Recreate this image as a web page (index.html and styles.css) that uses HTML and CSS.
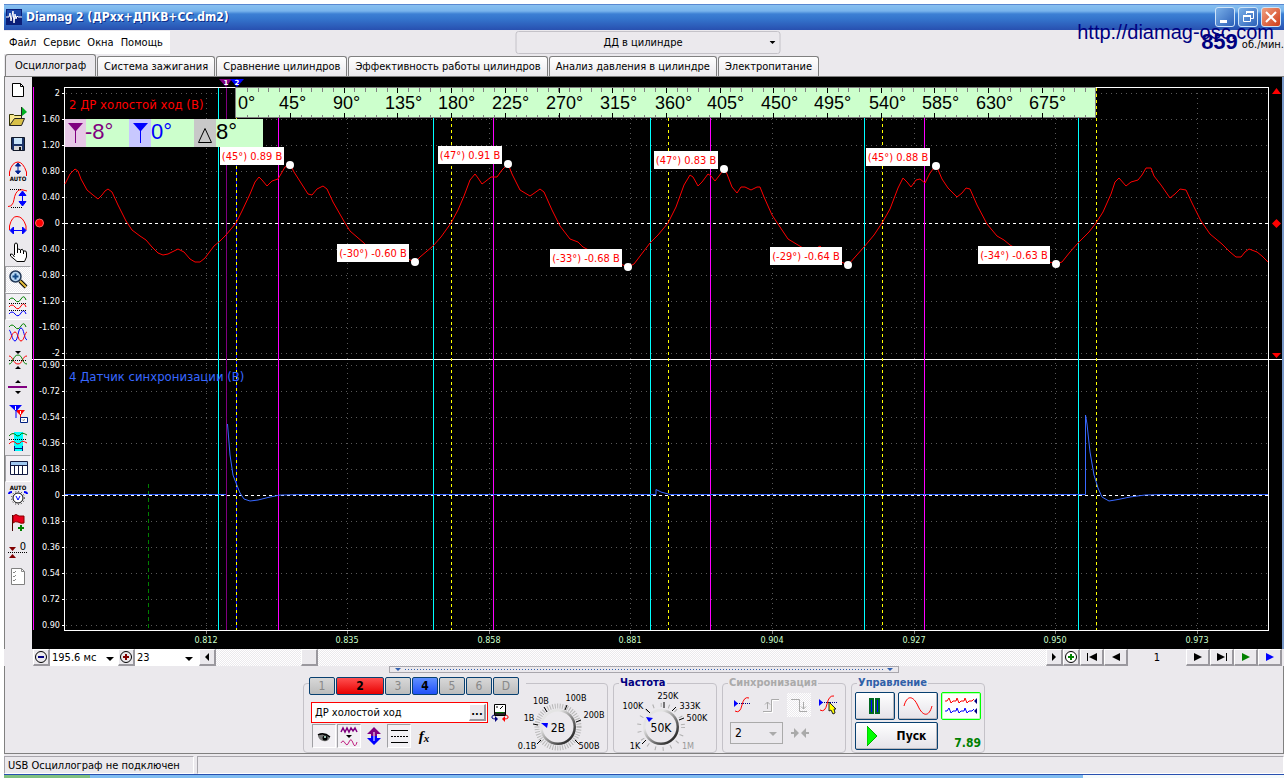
FILE: index.html
```html
<!DOCTYPE html>
<html lang="ru">
<head>
<meta charset="utf-8">
<title>Diamag 2</title>
<link rel="stylesheet" href="styles.css">
</head>
<body>
<div class="app">
  <header class="titlebar">
    <svg class="logo" width="16" height="16" viewBox="0 0 16 16"><rect width="16" height="16" fill="#0a1e78"/><rect x="1" y="1" width="14" height="7" fill="#1c46a8"/><path d="M0 8h3l1-4 1 8 2-10 1 12 1-9 1 5 1-3 1 1h4" fill="none" stroke="#fff"/></svg>
    <h1 class="title">Diamag 2 (ДРхх+ДПКВ+СС.dm2)</h1>
    <div class="winbtns">
      <button class="wbtn" aria-label="Свернуть"><svg width="18" height="18"><path d="M4 12h7v3H4z" fill="#fff"/></svg></button>
      <button class="wbtn" aria-label="Развернуть"><svg width="18" height="18" fill="none" stroke="#fff"><path d="M7.500 6V4.500h7v6H12"/><path d="M7 4h8" stroke-width="2"/><path d="M4.500 7.500h7v6h-7z"/><path d="M4 8h8" stroke-width="2"/></svg></button>
      <button class="wbtn close" aria-label="Закрыть"><svg width="18" height="18"><path d="M4 4l10 10M14 4L4 14" stroke="#fff" stroke-width="2"/></svg></button>
    </div>
  </header>
  <div class="menurow">
    <nav class="menu"><button>Файл</button><button>Сервис</button><button>Окна</button><button>Помощь</button></nav>
    <div class="preset"><select aria-label="Настройка"><option>ДД в цилиндре</option></select><svg class="arrow" width="6" height="3"><path d="M0 0h6l-3 3z"/></svg></div>
    <div class="rpm"><b>859</b><span>об./мин.</span></div>
    <a class="site" href="#">http://diamag-osc.com</a>
  </div>
  <div class="tabs" role="tablist">
    <button class="tab active" role="tab" aria-selected="true">Осциллограф</button><button class="tab" role="tab">Система зажигания</button><button class="tab" role="tab">Сравнение цилиндров</button><button class="tab" role="tab">Эффективность работы цилиндров</button><button class="tab" role="tab">Анализ давления в цилиндре</button><button class="tab" role="tab">Электропитание</button>
  </div>
  <main class="work">
    <aside class="tools">
      <button aria-label="Новый"><svg viewBox="0 0 20 20"><path d="M4.500 3.500h8l3 3v10h-11z" fill="#fff" stroke="#000"/><path d="M12.500 3.500v3h3" fill="none" stroke="#000"/></svg></button>
      <button aria-label="Открыть"><svg viewBox="0 0 20 20"><path d="M1.500 18.500v-11h4l1 1h7v3" fill="#f8e890" stroke="#333300"/><path d="M1.500 18.500l5-7h10l-3 7z" fill="#d8c048" stroke="#222"/><path d="M13.500 0v11" stroke="#222"/><path d="M14 0l5 5-5 4z" fill="#00b020"/></svg></button>
      <button aria-label="Сохранить"><svg viewBox="0 0 20 20"><path d="M3.500 3.500h13v13H5l-1.500-1.500z" fill="#1c3468" stroke="#101828"/><path d="M6 4h8v6H6z" fill="#c8e4f8"/><path d="M6 12h8v4H6z" fill="#d8d8d8"/><path d="M11 13h2v3h-2z" fill="#111"/></svg></button>
      <button aria-label="Автоусиление"><svg viewBox="0 0 20 20"><path d="M1.500 15v-4Q4 1 10 1q5 0 8.500 10v4" fill="none" stroke="red"/><path d="M10 3v9M7.500 5L10 2l2.500 3zM7.500 10L10 13l2.500-3z" fill="#002090" stroke="#002090"/><text x="10" y="20" class="tiny">AUTO</text></svg></button>
      <button aria-label="Амплитуда"><svg viewBox="0 0 20 20"><path d="M0 18.500q5 0 6-7T11 2q2-1 8 1" fill="none" stroke="red"/><path d="M2 1.500h12M3 19.500h12" stroke="#000" stroke-dasharray="1 1"/><path d="M14.500 5v10M11 7.500L14.500 3 18 7.500zM11 13.500L14.500 18l3.500-4.500z" fill="#00f" stroke="#00f"/></svg></button>
      <button aria-label="Длительность"><svg viewBox="0 0 20 20"><path d="M1.500 15v-4Q4 1 9 1.500q6 0 9 9.500v4" fill="none" stroke="red"/><path d="M4 15.500h12M5.500 12L2 15.500 5.500 19zM14.500 12l3.500 3.500-3.500 3.500z" fill="#00f" stroke="#00f"/></svg></button>
      <button aria-label="Рука"><svg viewBox="0 0 20 20"><path d="M6.500 13V3q0-2 1.500-2t1.500 2v5q1-2 3 0 2-2 3 1 3-1 3 2v4l-2 4.500H9L2.500 14v-2q2-1 4 3" fill="#fff" stroke="#000"/><path d="M9.500 8v3M12.500 8v3M15.500 9v3" stroke="#000"/></svg></button>
      <button class="on hatch" aria-label="Масштаб"><svg viewBox="0 0 20 20"><path d="M12 12l6 6" stroke="#000" stroke-width="4"/><path d="M12 12l6 6" stroke="#e8c040" stroke-width="2"/><circle cx="7.500" cy="7.500" r="5.500" fill="#b8d8f4" stroke="#223858" stroke-width="1.500"/><path d="M7.500 4.500v6M4.500 7.500h6" stroke="#104888" stroke-width="2"/></svg></button>
      <button class="on" aria-label="Раздельно"><svg viewBox="0 0 20 20" fill="none"><path d="M1 4q3-4 6 0t6-1 5 1" stroke="#008000"/><path d="M1 11q3-4 6 0t6-1 5 1" stroke="red"/><path d="M1 18q3-4 6 0t6-1 5 1" stroke="#00f"/><path d="M1 7.500h18M1 14.500h18" stroke="#000" stroke-dasharray="1 1"/></svg></button>
      <button aria-label="Вместе"><svg viewBox="0 0 20 20" fill="none"><path d="M1 4q3-4 6 0t6-1 5 1" stroke="#008000"/><path d="M1 7c2 0 3 11 6 11S10 5 13 5s3 11 6 12" stroke="#00f"/><path d="M1 17C3 17 4 9 7 9s3 9 6 9 4-9 6-9" stroke="red"/></svg></button>
      <button aria-label="Центр"><svg viewBox="0 0 20 20" fill="none"><path d="M1 6c4 0 4 8 9 8s4-8 9-8" stroke="red"/><path d="M1 14c4 0 4-9 9-9s4 9 9 9" stroke="#008000"/><path d="M1 10.500h18" stroke="#000" stroke-dasharray="1 1"/><path d="M7 1h6l-3 3zM7 19h6l-3-3z" fill="#000"/></svg></button>
      <button aria-label="Делитель"><svg viewBox="0 0 20 20"><path d="M0 10h19" stroke="#800080" stroke-width="2"/><path d="M7 6h6l-3-3zM7 14h6l-3 3z"/></svg></button>
      <button aria-label="Маркеры"><svg viewBox="0 0 20 20"><path d="M7 6h10l-4 5v7h-1v-7z" fill="red"/><path d="M1 1h13L8.500 7v7h-1V7z" fill="#00f"/><path d="M7.500 2v4M12.500 7v3" stroke="#fff"/><path d="M12.500 13.500h7v5h-7z" fill="#fff" stroke="#002080"/><path d="M14 15.500l1 1 2-1" fill="none" stroke="#888"/></svg></button>
      <button aria-label="Измерение"><svg viewBox="0 0 20 20" fill="none"><path d="M6 1h9v19H6z" fill="#0ff"/><path d="M1 5q4-5 8 0 3 0 4-2t6 1" stroke="#008000"/><path d="M1 13q4-5 8 0 3 0 4-2t6 1" stroke="red"/><path d="M1 8.500h18" stroke="#000" stroke-dasharray="1 1"/><path d="M6.500 15v5M14.500 15v5M7 17.500h7" stroke="#002080"/></svg></button>
      <button class="on" aria-label="Таблица"><svg viewBox="0 0 20 20"><path d="M2.500 3.500h17v13h-17z" fill="#fff" stroke="#101840"/><path d="M3 4h16v3H3z" fill="#a0c8f0"/><path d="M3 7.500h16M6.500 7v9M10.500 7v9M14.500 7v9" stroke="#101840"/></svg></button>
      <button aria-label="Авто вольты"><svg viewBox="0 0 20 20"><text x="10" y="5" class="tiny">AUTO</text><path d="M1 9q0-2 3-2M19 9q0-2-3-2" fill="none" stroke="#00f" stroke-width="2"/><circle cx="10" cy="13" r="6.500" fill="none" stroke="#333" stroke-dasharray="1 2"/><circle cx="10" cy="13" r="5" fill="#fff" stroke="#000"/><path d="M8 11l2 4 2-4" fill="none" stroke="#00f"/></svg></button>
      <button aria-label="Флаг"><svg viewBox="0 0 20 20"><path d="M4.500 3v16" stroke="#400"/><path d="M5 4q3-3 6 0h5v7q-3 1-6-1-3-1-5 1z" fill="#e8001c" stroke="#800"/><path d="M13 13v6M10 16h6" stroke="#008000" stroke-width="2"/></svg></button>
      <button aria-label="Ноль"><svg viewBox="0 0 20 20"><path d="M1 8h7l-3.500 4zM1 19h7l-3.500-4z" fill="#800000"/><path d="M0 13.500h19" stroke="#000" stroke-dasharray="1 1"/><text x="15" y="11" class="zero">0</text></svg></button>
      <button aria-label="Список"><svg viewBox="0 0 20 20" fill="none"><path d="M3.500 2.500h10l3 3v13h-13z" fill="#fff" stroke="#808080"/><path d="M13.500 2.500v3h3M5 6l1 1 2-2M5 10l1 1 2-2M5 14l1 1 2-2" stroke="#888"/></svg></button>
    </aside>
    <svg class="scope" viewBox="32 77 1250 572" role="img" aria-label="Осциллограмма">
      <rect x="32" y="77" width="1250" height="572" fill="#000"/>
      <g fill="none" shape-rendering="crispEdges">
        <path stroke="#585858" stroke-dasharray="1 4" d="M66 93.500H1268M66 119.500H1268M66 145.500H1268M66 171.500H1268M66 197.500H1268M66 249.500H1268M66 275.500H1268M66 301.500H1268M66 327.500H1268M66 353.500H1268M66 365.500H1268M66 391.500H1268M66 417.500H1268M66 443.500H1268M66 469.500H1268M66 521.500H1268M66 547.500H1268M66 573.500H1268M66 599.500H1268M66 625.500H1268M206.500 93V630M347.500 93V630M489.500 93V630M630.500 93V630M772.500 93V630M914.500 93V630M1055.500 93V630M1197.500 93V630"/>
        <path stroke="#fff" stroke-dasharray="3 3" d="M65 223.500H1268M65 495.500H1268"/>
        <path stroke="#fff" d="M64 87.500H1268.500V630.500H64.500V87M32 359.500H1282M62 93.500h2M62 119.500h2M62 145.500h2M62 171.500h2M62 197.500h2M62 223.500h2M62 249.500h2M62 275.500h2M62 301.500h2M62 327.500h2M62 353.500h2M62 365.500h2M62 391.500h2M62 417.500h2M62 443.500h2M62 469.500h2M62 495.500h2M62 521.500h2M62 547.500h2M62 573.500h2M62 599.500h2M62 625.500h2"/>
        <path stroke="#808080" d="M206.500 631v3M347.500 631v3M489.500 631v3M630.500 631v3M772.500 631v3M914.500 631v3M1055.500 631v3M1197.500 631v3"/>
        <path stroke="#0ff" d="M218.500 88V630M433.500 88V630M650.500 88V630M864.500 88V630M1078.500 88V630"/>
        <path stroke="#f0f" d="M33.500 87V630M278.500 88V630M493.500 88V630M710.500 88V630M924.500 88V630"/>
        <path stroke="#800080" d="M226.500 88V630"/>
        <path stroke="#00f" d="M236.500 88V630"/>
        <path stroke="#ff0" stroke-dasharray="3 3" d="M236.500 88V630M451.500 88V630M668.500 88V630M882.500 88V630M1096.500 88V630"/>
        <path stroke="#008000" stroke-dasharray="4 3" d="M148.500 484V630"/>
      </g>
      <path fill="none" stroke="#f00" stroke-linejoin="round" d="M65 184L70 174 75 169 78 171 81 179 87 190 93 195 98 199 102 195 105 191 108 189 112 192 118 205 126 221 132 230 140 236 146 240 152 247 158 253 163 255 168 254 178 249 184 252 190 259 195 262 200 262 205 258 214 246 220 241 226 235 236 223 242 211 250 194 255 182 259 177 262 180 267 186 272 181 278 179 281 174 285 167 290 164 294 172 301 183 308 194 312 195 317 189 323 186 327 189 333 202 345 223 350 231 357 237 364 243 370 250 400 255 408 259 415 262 420 257 433 246 441 237 451 223 458 210 464 196 470 180 475 174 478 178 482 184 486 181 491 177 497 177 502 170 508 164 512 174 520 190 530 196 533 194 540 189 544 192 552 210 560 226 570 239 578 242 583 247 600 256 628 267 634 264 650 243 658 235 668 223 676 207 684 185 690 175 693 177 698 186 702 182 708 174 711 176 715 181 719 176 724 169 727 174 732 187 737 193 741 187 745 187 751 190 757 187 760 187 764 197 772 215 780 227 788 239 798 245 810 252 820 246 830 257 848 265 856 256 864 247 874 235 882 223 890 209 898 188 903 178 907 182 911 187 916 180 920 179 925 183 930 173 936 165 942 179 948 188 957 197 962 193 966 188 970 189 977 205 987 224 997 236 1004 240 1010 245 1030 256 1056 264 1062 262 1070 252 1078 243 1089 232 1096 223 1103 212 1111 194 1115 182 1119 178 1126 186 1131 182 1138 180 1142 175 1146 168 1151 168 1154 176 1161 185 1170 198 1175 194 1180 189 1186 190 1192 203 1201 221 1210 234 1222 244 1230 252 1236 257 1241 257 1245 252 1249 249 1257 252 1262 256 1268 262"/>
      <path fill="none" stroke="#3868ff" d="M65 494.500H226M227.500 424L230 455 233 475 236 483 240 493 244 499 250 501 258 500 268 497.500 280 495 300 494.500H656V489.500L661 492 670 494.500H1085.500V415L1087 424 1090 452 1094 475 1098 488 1102 497 1109 501 1118 499.500 1130 497 1145 495 1160 494.500H1268"/>
      <g class="name"><text x="69" y="109" fill="#f00">2 ДР холостой ход (В)</text><text x="69" y="381" fill="#3868ff">4 Датчик синхронизации (В)</text></g>
      <g class="scale"><text x="60" y="96">2</text><text x="60" y="122">1.60</text><text x="60" y="148">1.20</text><text x="60" y="174">0.80</text><text x="60" y="200">0.40</text><text x="60" y="226">0</text><text x="60" y="252">-0.40</text><text x="60" y="278">-0.80</text><text x="60" y="304">-1.20</text><text x="60" y="330">-1.60</text><text x="60" y="356">-2</text><text x="60" y="368">-0.90</text><text x="60" y="394">-0.72</text><text x="60" y="420">-0.54</text><text x="60" y="446">-0.36</text><text x="60" y="472">-0.18</text><text x="60" y="498">0</text><text x="60" y="524">0.18</text><text x="60" y="550">0.36</text><text x="60" y="576">0.54</text><text x="60" y="602">0.72</text><text x="60" y="628">0.90</text></g>
      <g class="time"><text x="206" y="643">0.812</text><text x="347" y="643">0.835</text><text x="489" y="643">0.858</text><text x="630" y="643">0.881</text><text x="772" y="643">0.904</text><text x="914" y="643">0.927</text><text x="1055" y="643">0.950</text><text x="1197" y="643">0.973</text></g>
      <path d="M235.500 87.500H1095.500V117.500H235.500z" fill="#cfc" stroke="#808080"/>
      <g fill="none" shape-rendering="crispEdges"><path stroke="#808080" stroke-width="4" stroke-dasharray="1 9.740" d="M247 90H1095"/><path stroke="#808080" stroke-width="2" stroke-dasharray="1 9.740" d="M247 116H1095"/><path stroke="#000" stroke-width="5" stroke-dasharray="1 52.700" d="M290 90H1080M290 115H1080"/></g>
      <g class="deg"><text x="238" y="109">0°</text><text x="279" y="109">45°</text><text x="333" y="109">90°</text><text x="385" y="109">135°</text><text x="438" y="109">180°</text><text x="492" y="109">225°</text><text x="546" y="109">270°</text><text x="600" y="109">315°</text><text x="655" y="109">360°</text><text x="707" y="109">405°</text><text x="761" y="109">450°</text><text x="814" y="109">495°</text><text x="869" y="109">540°</text><text x="922" y="109">585°</text><text x="976" y="109">630°</text><text x="1029" y="109">675°</text></g>
      <path d="M219 79h13l-6 8z" fill="#800080"/><path d="M230 79h14l-7 8z" fill="#00f"/>
      <g class="mark"><text x="226" y="85">1</text><text x="237" y="85">2</text></g>
      <path d="M65 119H263V147H65z" fill="#cfc"/><path d="M65 119h21v28H65z" fill="#e6c8e6"/><path d="M129 119h22v28h-22z" fill="#c8c8ff"/><path d="M194 119h22v28h-22z" fill="#c8c8c8"/>
      <path d="M68 123h15l-7 8v12h-1v-12z" fill="#800080"/><path d="M133 123h15l-7 8v12h-1v-12z" fill="#00f"/><path d="M198.500 142.500h13l-6.500-14z" fill="none" stroke="#000"/>
      <g class="delta"><text x="85" y="139" fill="#800080">-8°</text><text x="151" y="139" fill="#00f">0°</text><text x="216" y="139" fill="#000">8°</text></g>
      <path fill="#fff" d="M220 147h64v18h-64zM438 146h64v18h-64zM654 151h64v18h-64zM866 148h64v18h-64zM337 244h72v18h-72zM550 249h72v18h-72zM770 247h72v18h-72zM978 246h72v18h-72z"/>
      <g class="call"><text x="252" y="160">(45°) 0.89 В</text><text x="470" y="159">(47°) 0.91 В</text><text x="686" y="164">(47°) 0.83 В</text><text x="898" y="161">(45°) 0.88 В</text><text x="373" y="257">(-30°) -0.60 В</text><text x="586" y="262">(-33°) -0.68 В</text><text x="806" y="260">(-29°) -0.64 В</text><text x="1014" y="259">(-34°) -0.63 В</text></g>
      <g fill="#fff"><circle cx="290" cy="165" r="4"/><circle cx="508" cy="164" r="4"/><circle cx="724" cy="169" r="4"/><circle cx="936" cy="166" r="4"/><circle cx="415" cy="262" r="4"/><circle cx="628" cy="267" r="4"/><circle cx="848" cy="265" r="4"/><circle cx="1056" cy="264" r="4"/></g>
      <circle cx="39.500" cy="223" r="4" fill="#f00" stroke="#f66"/>
      <path fill="#f00" d="M1272 94h9l-4.500-6zM1276.500 219l4.500 4.500-4.500 4.500-4.500-4.500zM1272 353h9l-4.500 5z"/>
    </svg>
  </main>
  <div class="navrow">
    <button class="nb" aria-label="Уменьшить"><svg width="14" height="14"><circle cx="7" cy="7" r="5.500" fill="none" stroke="#000"/><path d="M4 7h6" stroke="#000080" stroke-width="2"/></svg></button>
    <div class="pick span"><select aria-label="Развёртка"><option>195.6 мс</option></select><svg class="arrow" width="8" height="4"><path d="M0 0h8l-4 4z"/></svg></div>
    <button class="nb" aria-label="Увеличить"><svg width="14" height="14"><circle cx="7" cy="7" r="5.500" fill="none" stroke="#000"/><path d="M4 7h6M7 4v6" stroke="#800000" stroke-width="2"/></svg></button>
    <div class="pick pages"><select aria-label="Масштаб"><option>23</option></select><svg class="arrow" width="8" height="4"><path d="M0 0h8l-4 4z"/></svg></div>
    <button class="nb" aria-label="Влево"><svg width="6" height="8"><path d="M5 0v8L1 4z"/></svg></button>
    <input class="scroll" type="range" min="0" max="1000" value="104" aria-label="Прокрутка">
    <button class="nb" aria-label="Вправо"><svg width="6" height="8"><path d="M1 0v8l4-4z"/></svg></button>
    <button class="nb" aria-label="Добавить"><svg width="14" height="14"><circle cx="7" cy="7" r="5.500" fill="#fff" stroke="#000"/><path d="M4 7h6M7 4v6" stroke="#008000" stroke-width="2"/></svg></button>
    <button class="nb wide" aria-label="Первая"><svg width="12" height="8"><path d="M1 0h1v8H1zM11 0v8L3 4z"/></svg></button>
    <button class="nb wide" aria-label="Назад"><svg width="8" height="8"><path d="M8 0v8L0 4z"/></svg></button>
    <output class="page">1</output>
    <button class="nb wide" aria-label="Вперёд"><svg width="8" height="8"><path d="M0 0v8l8-4z"/></svg></button>
    <button class="nb wide" aria-label="Последняя"><svg width="12" height="8"><path d="M10 0h1v8h-1zM1 0v8l8-4z"/></svg></button>
    <button class="nb wide" aria-label="Воспроизвести"><svg width="8" height="8"><path d="M0 0v8l8-4z" fill="#008000"/></svg></button>
    <button class="nb wide" aria-label="Далее"><svg width="8" height="8"><path d="M0 0v8l8-4z" fill="#00f"/></svg></button>
  </div>
  <section class="bottom">
    <div class="splitter"><svg width="6" height="3"><path d="M0 0h6l-3 3z"/></svg><i></i><svg width="6" height="3"><path d="M0 0h6l-3 3z"/></svg></div>
    <div class="groups">
      <fieldset class="group chan">
        <legend><button class="ch">1</button><button class="ch red">2</button><button class="ch">3</button><button class="ch blue">4</button><button class="ch">5</button><button class="ch">6</button><button class="ch">D</button></legend>
        <div class="chbody">
          <div class="chleft">
            <div class="row"><div class="field"><input type="text" value="ДР холостой ход" aria-label="Имя канала"><button class="dots" aria-label="Выбрать">...</button></div>
              <button class="flat small" aria-label="Заменить"><svg width="18" height="19" viewBox="0 0 18 19"><path d="M3.500 1.500h11v11h-11z" fill="#fff" stroke="#000"/><path d="M4 9h10v3H4z" fill="#222"/><path d="M5 9.500h8" stroke="#060"/><path d="M9 6l3-3M5 4h2" stroke="#000"/><path d="M3 12q-3 1-2 3 1 1 4 1" fill="none" stroke="#000080"/><path d="M4 13v6l3-3z" fill="#000080"/><path d="M15 12q3 1 2 3-1 1-4 1" fill="none" stroke="red"/><path d="M14 13v6l-3-3z" fill="red"/></svg></button></div>
            <div class="row icons">
              <button class="flat on" aria-label="Видимость"><svg width="22" height="20" viewBox="0 0 22 20"><path d="M5 10q6-3 12 1-1 5-7 4-4-1-5-5z" fill="#777"/><path d="M5 9q6-3 12 2" fill="none" stroke="#000" stroke-width="1.500"/><circle cx="12" cy="12" r="2.500"/><circle cx="12" cy="11" r="1" fill="#cfe"/></svg></button>
              <button class="flat on" aria-label="Фильтр"><svg width="20" height="20" viewBox="0 0 20 20" fill="none"><path d="M2 6l2-4 2 4 2-4 2 4 2-4 2 3 2-3 2 4" stroke="#800080" stroke-width="1.500"/><path d="M7 9h6l-3 3z" fill="#000"/><path d="M2 17q2-4 4 0t4-1 4 1 4-1" stroke="#c02080"/></svg></button>
              <button class="flat" aria-label="Инвертировать"><svg width="20" height="20" viewBox="0 0 20 20"><path d="M10 1l7 7h-4v3H7V8H3z" fill="#800080"/><path d="M10 19l7-7h-4v-2H7v2H3z" fill="#00f"/><path d="M10 6v9" stroke="#fff"/></svg></button>
              <button class="flat on" aria-label="Линии"><svg width="20" height="20"><path d="M2 4.500h17M2 16.500h17" stroke="#000"/><path d="M2 10.500h17" stroke="#000" stroke-dasharray="2 1"/></svg></button>
              <button class="flat fx">f<small>x</small></button>
            </div>
          </div>
          <svg class="knob" width="94" height="62" viewBox="512 688 94 62"><circle cx="557" cy="726" r="21" fill="none" stroke="#b8b8b8" stroke-width="5" stroke-dasharray="1 1.500"/><use href="#dial" x="557" y="726"/><path d="M532 723l5 1M543 706l3 5M566 704l-2 5M580 719l-5 2M578 743l-4-4M536 743l4-4" stroke="#000"/><path d="M540 722l7 0-1 5z" fill="#00f"/><g class="klabel"><text x="540" y="703">10В</text><text x="575" y="700">100В</text><text x="528" y="720">1В</text><text x="593" y="717">200В</text><text x="526" y="748">0.1В</text><text x="588" y="748">500В</text></g><text class="kval" x="557" y="731">2В</text></svg>
        </div>
      </fieldset>
      <fieldset class="group freq">
        <legend>Частота</legend>
        <svg class="knob" width="94" height="62" viewBox="618 688 94 62"><defs><linearGradient id="dialShade" x2="1" y2="1"><stop offset=".3" stop-color="#e4e4e4"/><stop offset=".7" stop-color="#555"/><stop offset="1" stop-color="#000"/></linearGradient><g id="dial"><circle r="18" fill="url(#dialShade)"/><circle r="15.500" fill="#ebe9ed"/></g></defs><circle cx="661" cy="726" r="22" fill="none" stroke="#b0b0b0" stroke-width="4" stroke-dasharray="1 6.900"/><use href="#dial" x="661" y="726"/><path d="M646 708l4 4M664 701v6M672 710l4-4M679 719l5-2M642 743l4-4" stroke="#000"/><path d="M646 716l7 1-4 4z" fill="#00f"/><g class="klabel"><text x="668" y="698">250K</text><text x="633" y="708">100K</text><text x="690" y="708">333K</text><text x="697" y="720">500K</text><text x="635" y="748">1K</text><text x="688" y="748" fill="#999">1M</text></g><text class="kval" x="661" y="731">50K</text></svg>
      </fieldset>
      <fieldset class="group sync">
        <legend>Синхронизация</legend>
        <div class="row modes">
          <button class="flat" aria-label="Авто"><svg width="20" height="20" viewBox="0 0 20 20" fill="none"><path d="M3 16q5 3 7-6t7-7" stroke="red"/><path d="M5 8.500h13" stroke="#000080" stroke-dasharray="1 1"/><path d="M2 5v7l4-3.500z" fill="#00f"/></svg></button>
          <button class="flat" disabled aria-label="Фронт"><svg width="20" height="20" fill="none" stroke="#aaa"><path d="M2 16.500h8.500v-12H18M6.500 14V7M4 9.500L6.500 7 9 9.500"/><path d="M3 17.500h8.500v-12H18" stroke="#fff"/></svg></button>
          <button class="flat hatch" disabled aria-label="Спад"><svg width="20" height="20" fill="none" stroke="#aaa"><path d="M2 4.500h8.500v12H18M14.500 7v7M12 11.500l2.500 2.500 2.500-2.500"/></svg></button>
          <button class="flat" aria-label="Указать"><svg width="22" height="20" viewBox="0 0 22 20" fill="none"><path d="M3 15q5 3 7-6t7-8" stroke="red"/><path d="M5 7.500h15" stroke="#000080" stroke-dasharray="1 1"/><path d="M2 4v7l4-3.500z" fill="#00f"/><path d="M12 7v9l2-1 2 4 2-1-1-4h2z" fill="#ff0" stroke="#222"/></svg></button>
        </div>
        <div class="row"><div class="pick source"><select disabled aria-label="Канал"><option>2</option></select><svg class="arrow" width="8" height="4"><path d="M0 0h8l-4 4z" fill="#aaa"/></svg></div><svg width="20" height="12"><path d="M1 6h6M13 6h6" stroke="#aaa" stroke-width="2"/><path d="M4 1v10l5-5zM16 1v10l-5-5z" fill="#aaa"/></svg></div>
      </fieldset>
      <fieldset class="group ctl">
        <legend>Управление</legend>
        <div class="ctlgrid">
          <button class="big" aria-label="Пауза"><svg width="14" height="16"><path d="M2 1h3v14H2zM8 1h3v14H8z" fill="#00f" stroke="#006820" stroke-width="2"/></svg></button>
          <button class="big" aria-label="Однократно"><svg width="30" height="20" fill="none"><path d="M1 10C4 -1 10 -1 15 10s11 11 14 0" stroke="red"/></svg></button>
          <button class="big green" aria-label="Непрерывно"><svg width="34" height="22" viewBox="0 0 34 22" fill="none"><path d="M1 6h2l2-3 2 5 2-2h3l1-3 2 5 2-2h3l1-3 2 5 2-2h3l2-2" stroke="red"/><path d="M1 16h2l2-3 2 5 2-2h3l1-3 2 5 2-2h3l1-3 2 5 2-2h3l2-2" stroke="#00f"/><path d="M33 3v6l-3-3zM33 13v6l-3-3z" fill="#000080"/></svg></button>
          <button class="big run"><svg width="10" height="20"><path d="M0 0l10 10L0 20z" fill="#0f0" stroke="#0a0"/></svg>Пуск</button>
          <output>7.89</output>
        </div>
      </fieldset>
    </div>
  </section>
  <footer class="status"><div>USB Осциллограф не подключен</div><div></div></footer>
  <div class="taskbar"><i></i><i></i><i></i></div>
</div>
</body>
</html>
```
FILE: styles.css
```css
* { box-sizing: border-box; }
body { margin: 0; background: #fff; color: #000; font: 11px "DejaVu Sans Condensed", "DejaVu Sans", sans-serif; }
button, input, select, output { font: inherit; color: inherit; margin: 0; padding: 0; }
button { border: 0; background: none; }
svg { display: block; flex: none; }
select { appearance: none; border: 0; background: none; width: 100%; height: 100%; border-radius: 0; opacity: 1; }
.app { margin: 4px 4px 0; min-height: calc(100vh - 4px); display: flex; flex-direction: column; background: #ebe9ed; }

.titlebar { display: flex; align-items: center; height: 26px; padding: 0 3px 0 2px; gap: 4px; background: linear-gradient(#2a50b0 0, #88c0f0 1px, #78b4ec 7px, #3c80d4 10px, #3474cc 15px, #2850b0 100%); }
.title { margin: 0; flex: 1; color: #fff; font: bold 12px "DejaVu Sans Condensed", sans-serif; text-shadow: 1px 1px 0 #10308c; }
.winbtns { display: flex; gap: 3px; }
.wbtn { width: 20px; height: 20px; border: 1px solid #d0e4f8; border-radius: 3px; background: linear-gradient(135deg, #7ab0e8, #2c60b8); }
.wbtn.close { background: linear-gradient(135deg, #f0a080, #d03c18); }

.menurow { position: relative; display: flex; justify-content: space-between; height: 24px; align-items: center; }
.menu { display: flex; gap: 7px; width: 166px; height: 23px; padding: 0 5px; background: #fff; }
.preset { position: absolute; left: 50%; transform: translateX(-50%); width: 265px; height: 23px; border: 1px solid #c4c2c8; border-radius: 3px; margin-left: 4px; }
.preset select { text-align-last: center; padding-right: 10px; }
.arrow { position: absolute; right: 4px; top: 50%; margin-top: -1px; pointer-events: none; }
.rpm { display: flex; align-items: center; gap: 4px; }
.rpm b { font: bold 22px "Liberation Sans", sans-serif; color: #000080; }
.rpm span { padding-top: 4px; }
.site { position: absolute; right: 10px; top: -9px; font: 20px "Liberation Sans", sans-serif; color: #000080; text-decoration: none; }

.tabs { display: flex; align-items: flex-end; gap: 1px; height: 23px; padding-left: 1px; border-bottom: 1px solid #808080; }
.tab { height: 20px; padding: 0 6px; border: 1px solid #808080; border-bottom: 0; border-radius: 3px 3px 0 0; background: linear-gradient(#fff, #ebe9ed); white-space: nowrap; }
.tab.active { height: 22px; padding: 0 9px; background: #ebe9ed; }

.work { display: flex; border-right: 2px solid #7898c8; }
.tools { width: 28px; flex: none; border-left: 1px solid #808080; padding-right: 1px; display: flex; flex-direction: column; }
.tools button { height: 27px; padding-top: 2px; display: flex; align-items: flex-start; justify-content: center; border: 1px solid transparent; }
.tools svg { width: 20px; height: 20px; overflow: visible; }
.tools .on, .flat.on { border: 1px solid #a0a0a4; border-right-color: #fff; border-bottom-color: #fff; background: #f2f0f4; }
.hatch, .tools .hatch { background: repeating-conic-gradient(#fff 0 25%, #ebe9ed 0 50%) 0 0 / 2px 2px; }
.tiny { font: bold 6px "DejaVu Sans Condensed", sans-serif; text-anchor: middle; }
.zero { font: 11px "DejaVu Sans Condensed", sans-serif; text-anchor: middle; }
.scope { flex: 1; min-width: 0; height: auto; }
.name { font-size: 13px; }
.scale { font-size: 9px; fill: #fff; text-anchor: end; }
.time { font-size: 9px; fill: #cfc; text-anchor: middle; }
.deg { font: 18px "Liberation Sans", sans-serif; }
.mark { font: bold 7px "DejaVu Sans", sans-serif; fill: #fff; text-anchor: middle; }
.delta { font: 22px "Liberation Sans", sans-serif; }
.call { font-size: 11px; fill: #f00; text-anchor: middle; }

.navrow { display: flex; height: 17px; padding: 0 2px 0 29px; }
.nb { width: 17px; flex: none; display: flex; align-items: center; justify-content: center; border: 1px solid #fff; border-right: 2px solid #9a989e; border-bottom: 2px solid #9a989e; background: #ebe9ed; }
.nb.wide { width: 24px; }
.pick { position: relative; flex: none; background: #fff; }
.pick select { padding-left: 2px; }
.span { width: 68px; }
.pages { width: 64px; }
.pages .arrow { right: 6px; }
.scroll { appearance: none; flex: 1; min-width: 0; height: 17px; background: repeating-conic-gradient(#fff 0 25%, #ebe9ed 0 50%) 0 0 / 2px 2px; }
.scroll::-webkit-slider-thumb { appearance: none; width: 17px; height: 17px; border: 1px solid #fff; border-right: 2px solid #9a989e; border-bottom: 2px solid #9a989e; background: #ebe9ed; }
.page { width: 58px; text-align: center; line-height: 17px; }

.bottom { flex: 1; border: 1px solid #808080; border-top: 0; display: flex; flex-direction: column; align-items: center; }
.splitter { width: 510px; height: 7px; border: 1px solid #a8a6ac; display: flex; align-items: center; justify-content: space-between; gap: 4px; padding: 0 5px; fill: #3060b0; }
.splitter i { flex: 1; height: 1px; background: repeating-linear-gradient(90deg, #3060b0 0 1px, transparent 1px 3px); }
.groups { display: flex; gap: 5px; padding-top: 4px; }
.group { min-width: 0; margin: 0; padding: 0; height: 76px; border: 1px solid #c4c2c8; border-radius: 4px; }
.group legend { height: 12px; line-height: 12px; margin-left: 5px; padding: 0 1px; font-weight: bold; font-size: 11px; color: #000080; }
.chan { width: 305px; }
.chan legend { display: flex; gap: 1px; padding: 0 7px 0 0; font-weight: normal; }
.ch { width: 26px; height: 18px; border: 1px solid #084070; border-radius: 2px; background: linear-gradient(#d8d8d8, #bcbcbc); color: #888; font-size: 12px; }
.ch.red { width: 48px; background: linear-gradient(#ff5050, #e80000); color: #000; font-weight: bold; }
.ch.blue { background: linear-gradient(#6090ff, #2050f8); color: #000; font-weight: bold; }
.row { display: flex; align-items: center; }
.chbody { display: flex; justify-content: space-between; }
.chleft { padding: 13px 0 0 7px; }
.field { display: flex; width: 177px; height: 21px; border: 1px solid #f00; background: #fff; padding: 1px; }
.field input { flex: 1; min-width: 0; border: 0; background: none; padding-left: 2px; }
.dots { width: 17px; line-height: 10px; font-weight: bold; border: 1px solid #fff; border-right: 2px solid #9a989e; border-bottom: 2px solid #9a989e; background: #ebe9ed; }
.flat { width: 24px; height: 24px; display: flex; align-items: center; justify-content: center; border: 1px solid transparent; }
.flat.small { height: 20px; }
.icons { gap: 1px; padding: 1px 0 0 1px; }
.fx { font: italic bold 15px "Liberation Serif", serif; }
.fx small { font-size: 11px; padding-top: 4px; }
.knob { overflow: visible; }
.chbody .knob { margin-left: -20px; }
.klabel { font-size: 9px; text-anchor: middle; }
.kval { font-size: 12px; text-anchor: middle; }
.freq { width: 104px; }
.freq .knob { margin-left: 4px; }
.sync { width: 124px; }
.sync legend { color: #aaa; }
.modes { justify-content: space-between; padding: 4px 5px 5px 7px; }
.source { width: 53px; height: 22px; margin: 0 7px; border: 1px solid #aaa; background: #ebe9ed; font-size: 12px; }
.source select { padding-left: 4px; }
.source .arrow { right: 5px; }
.ctl { width: 134px; }
.ctl legend { color: #3060a8; }
.ctlgrid { display: grid; grid-template-columns: 40px 40px 40px; gap: 2px 3px; padding: 3px 3px 0; }
.big { height: 28px; border: 1px solid #084070; border-radius: 2px; background: linear-gradient(#fff, #e4e2e8); box-shadow: inset -1px -1px #b8b6bc; display: flex; align-items: center; justify-content: center; }
.big.green { border: 1px solid #0f0; background: #fff; box-shadow: inset 0 0 0 1px #bfb; }
.run { grid-column: span 2; font-weight: bold; font-size: 12px; gap: 20px; }
.ctl output { align-self: end; text-align: right; font-weight: bold; font-size: 12px; color: #008000; }

.status { display: flex; gap: 3px; height: 18px; margin-top: 2px; }
.status div { border: 1px solid #a8a6ac; border-right-color: #fff; border-bottom-color: #fff; padding-left: 3px; line-height: 17px; width: 190px; flex: none; }
.status div + div { flex: 1; }
.taskbar { display: flex; height: 4px; border-top: 1px solid #2850b0; }
.taskbar i { width: 86px; background: #80c080; }
.taskbar i + i { flex: 1; background: #80bcf0; }
.taskbar i + i + i { flex: none; width: 201px; background: #f4fafc; }
```
